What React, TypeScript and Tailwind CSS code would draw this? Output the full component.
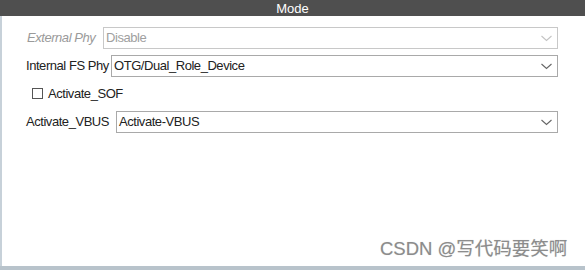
import React from "react";

function Chevron({ color }: { color: string }) {
  return (
    <svg width="11" height="7" viewBox="0 0 11 7" className="shrink-0">
      <path d="M0.5 1 L5.5 5.5 L10.5 1" fill="none" stroke={color} strokeWidth="1.1" />
    </svg>
  );
}

function Select({ value, disabled }: { value: string; disabled?: boolean }) {
  return (
    <div
      className={`flex h-[22px] flex-1 items-center justify-between border bg-white pl-[2px] pr-[5px] ${
        disabled ? "border-[#c8c8c8] text-[#a0a0a0]" : "border-[#a9a9a9] text-[#222]"
      }`}
    >
      <span className="whitespace-nowrap">{value}</span>
      <Chevron color={disabled ? "#c4c4c4" : "#666"} />
    </div>
  );
}

export default function App() {
  return (
    <div
      className="relative flex h-[270px] w-[585px] flex-col overflow-hidden bg-white text-[13px] tracking-[-0.45px]"
      style={{ fontFamily: '"Liberation Sans", Arial, sans-serif' }}
    >
      <div className="flex h-[16px] shrink-0 items-center justify-center bg-[#4f4f4f] text-[13px] leading-none tracking-normal text-white">
        Mode
      </div>
      <div className="flex flex-1 flex-col border-l-2 border-[#c7d1d9] pr-[27px] pt-[11px]">
        <div className="flex items-center pl-[25px]">
          <span className="w-[76px] whitespace-nowrap italic text-[#9a9a9a]">External Phy</span>
          <Select value="Disable" disabled />
        </div>
        <div className="mt-[6px] flex items-center pl-[24px]">
          <span className="w-[85px] whitespace-nowrap text-[#222]">Internal FS Phy</span>
          <Select value="OTG/Dual_Role_Device" />
        </div>
        <div className="mt-[11px] flex h-[11px] items-center pl-[30px]">
          <span className="h-[11px] w-[11px] border border-[#555] bg-white" />
          <span className="ml-[5px] whitespace-nowrap text-[#222]">Activate_SOF</span>
        </div>
        <div className="mt-[12px] flex items-center pl-[24px]">
          <span className="w-[90px] whitespace-nowrap text-[#222]">Activate_VBUS</span>
          <Select value="Activate-VBUS" />
        </div>
      </div>
      <div className="h-[4px] shrink-0 bg-[#b8c3cb]" />
      <div
        className="absolute left-[380px] top-[235px] whitespace-nowrap text-[18.5px] tracking-normal text-[#8c8c8c]"
        style={{ fontFamily: '"Liberation Sans", "Noto Sans CJK SC", sans-serif', textShadow: "0 0 1px #d0d0d0" }}
      >
        CSDN @写代码要笑啊
      </div>
    </div>
  );
}
